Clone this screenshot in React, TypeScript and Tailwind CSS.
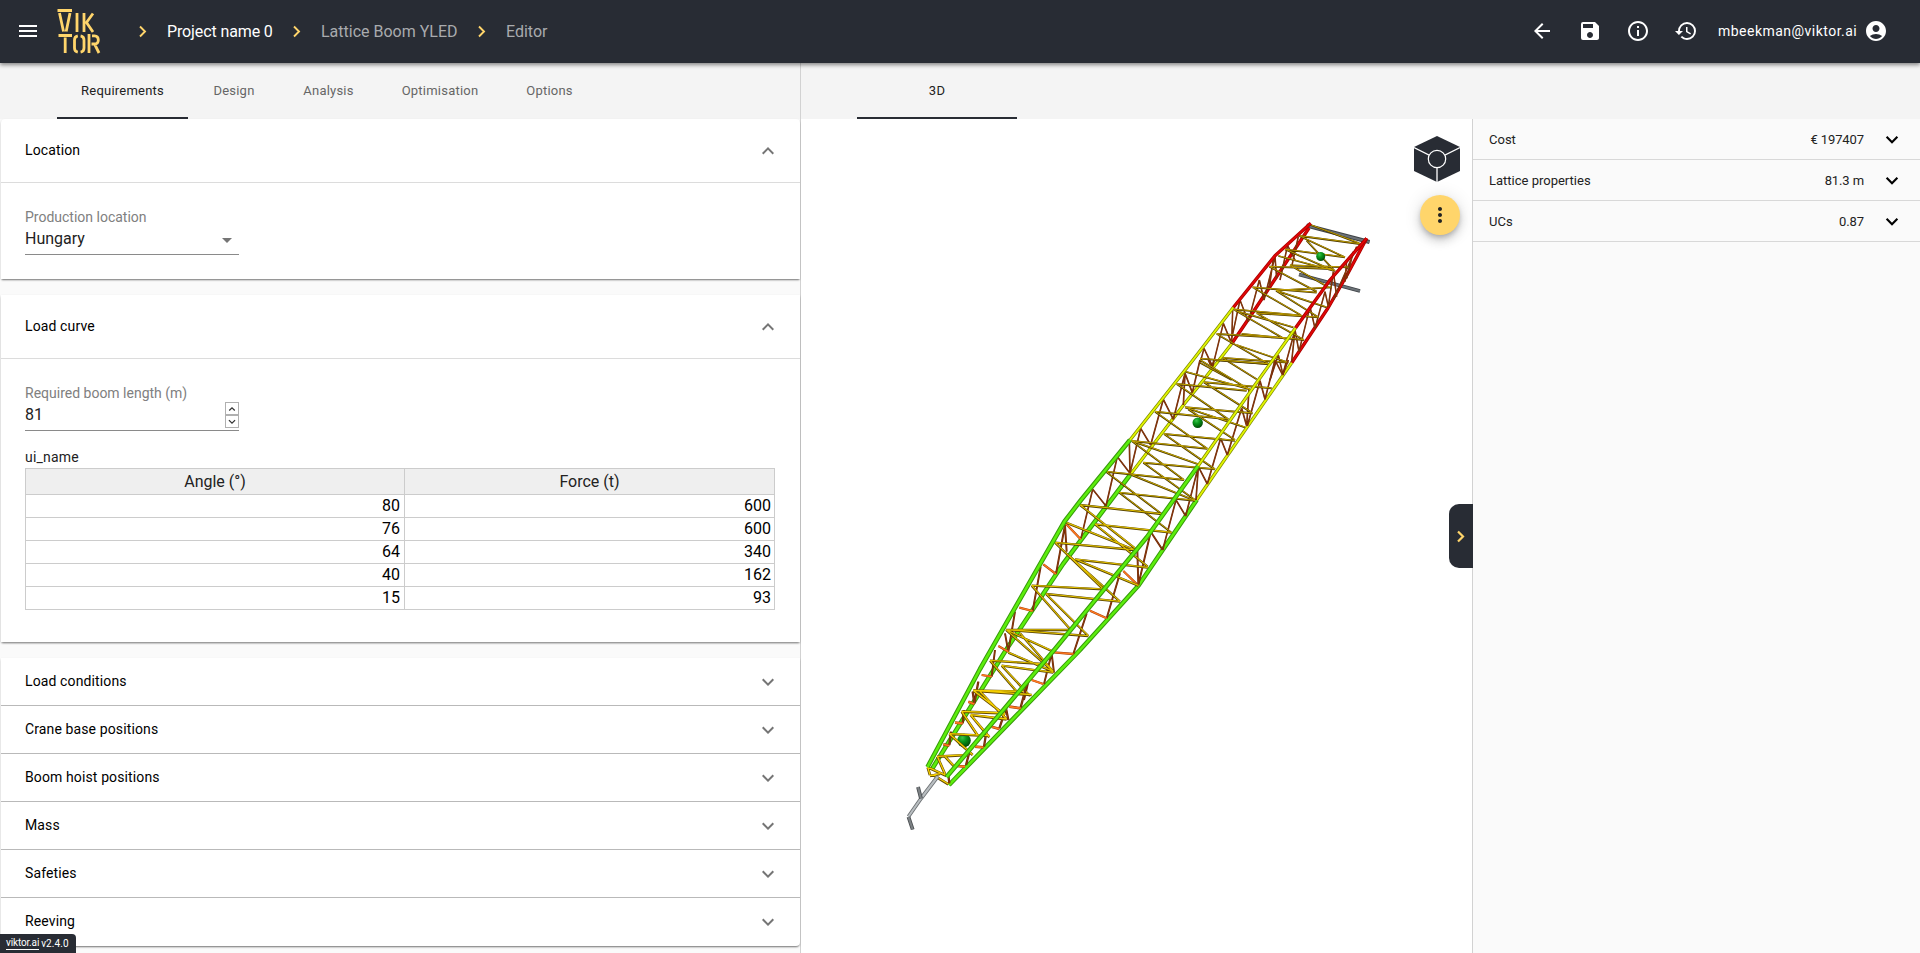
import type { ReactNode } from "react";
import {
  MdAccountCircle,
  MdArrowBack,
  MdArrowDropDown,
  MdExpandLess,
  MdExpandMore,
  MdHistory,
  MdInfoOutline,
  MdMenu,
  MdMoreVert,
  MdSave,
} from "react-icons/md";

type Segment = [number, number, number, number];

function Chevron({ className, direction = "right" }: { className: string; direction?: "right" | "down" | "up" }) {
  const d = { right: "M2 1.5 7 6.5 2 11.5", down: "M1.5 3.5 6.5 8.5 11.5 3.5", up: "M2 9 6.5 4.5 11 9" }[direction];
  return (
    <svg viewBox="0 0 13 13" className={className} fill="none" stroke="currentColor">
      <path d={d} />
    </svg>
  );
}

function Logo() {
  return (
    <svg viewBox="0 0 44 46" className="h-[46px] w-[44px]" fill="none" stroke="#ffd56b" strokeWidth="2.8">
      <path d="M.5 2.5H15M2.5 5 6.5 23.5M13 5 9.2 23.5M20 5V24M27 5V24M36 5.5 29.5 14.5 36 24" />
      <path d="M1.5 27.5H15M8.2 29.5V45M20.8 27.8Q17.5 28.5 17.5 32V40Q17.5 43.5 20.8 44.2M23.6 27.8Q27 28.5 27 32V40Q27 43.5 23.6 44.2M32 26V45M35 27.8H37.5Q41.3 28 41.3 32T37.5 36L42 45M34.5 36H38" />
    </svg>
  );
}

const crumbs = [
  { label: "Project name 0", className: "w-[105px] text-white tracking-[-0.12px]" },
  { label: "Lattice Boom YLED", className: "w-[136px] text-[#a9abae]" },
  { label: "Editor", className: "w-[42px] text-[#a9abae]" },
];

function Header() {
  return (
    <header className="relative z-10 flex h-[63px] shrink-0 items-center bg-[#282c34] pb-px pl-4 text-white shadow-[0_2px_4px_rgba(0,0,0,0.45)]">
      <MdMenu className="size-6" />
      <div className="ml-[17px]">
        <Logo />
      </div>
      <nav className="ml-[37px] flex items-center text-base">
        {crumbs.map((c) => (
          <div key={c.label} className="flex items-center whitespace-nowrap pr-[20px]">
            <Chevron className="mr-[16px] size-[13px] stroke-[1.9] text-[#ffd56b]" />
            <span className={`pt-[2px] ${c.className}`}>{c.label}</span>
          </div>
        ))}
      </nav>
      <div className="ml-auto flex items-center gap-6 pr-8">
        <MdArrowBack className="size-6" />
        <MdSave className="size-6" />
        <MdInfoOutline className="size-6" />
        <MdHistory className="size-6" />
        <div className="-ml-1 flex items-center gap-[7px]">
          <span className="w-[139px] whitespace-nowrap pb-px text-sm tracking-[0.48px]">mbeekman@viktor.ai</span>
          <MdAccountCircle className="size-6" />
        </div>
      </div>
    </header>
  );
}

function Tab({ label, className, active }: { label: string; className: string; active?: boolean }) {
  return (
    <div
      className={`flex items-center justify-center border-b-2 pt-[2px] text-[13px] tracking-[0.22px] ${
        active ? "border-[#282c34] text-[#222]" : "border-transparent text-[#666]"
      } ${className}`}
    >
      {label}
    </div>
  );
}

function PanelTitle({ title, open }: { title: string; open?: boolean }) {
  return (
    <div
      className={`flex items-center justify-between pl-6 pr-5 text-sm tracking-[0.12px] text-black ${
        open ? "h-16 border-b border-[#dcdcdc]" : "h-12"
      }`}
    >
      <span className="pb-[2px]">{title}</span>
      {open ? <MdExpandLess className="size-6 text-[#757575]" /> : <MdExpandMore className="size-6 text-[#757575]" />}
    </div>
  );
}

function Card({ className, children }: { className: string; children: ReactNode }) {
  return (
    <section className={`bg-white shadow-[0_2px_2px_-1px_rgba(0,0,0,0.4),0_1px_2px_rgba(0,0,0,0.2)] ${className}`}>
      {children}
    </section>
  );
}

const curve = [
  [80, 600],
  [76, 600],
  [64, 340],
  [40, 162],
  [15, 93],
];

const closedPanels = ["Load conditions", "Crane base positions", "Boom hoist positions", "Mass", "Safeties", "Reeving"];

function Requirements() {
  return (
    <div className="flex h-full w-[801px] shrink-0 flex-col border-r border-[#d2d2d2] bg-[#fafafa]">
      <div className="flex h-14 shrink-0 bg-[#f4f4f4] pl-[57px]">
        <Tab label="Requirements" className="w-[131px]" active />
        <Tab label="Design" className="w-[92px]" />
        <Tab label="Analysis" className="w-[97px]" />
        <Tab label="Optimisation" className="w-[126px]" />
        <Tab label="Options" className="w-[93px]" />
      </div>
      <div className="flex flex-col gap-4 pl-px">
        <Card className="h-[160px] rounded-t">
          <PanelTitle title="Location" open />
          <div className="px-6 pt-[24px]">
            <div className="flex h-5 items-center text-sm text-[#808080]">Production location</div>
            <div className="flex h-[28px] w-[214px] items-center justify-between border-b border-[#8a8a8a] pb-[2px] text-base text-[#222]">
              <span className="pb-[2px]">Hungary</span>
              <MdArrowDropDown className="size-6 text-[#757575]" />
            </div>
          </div>
        </Card>
        <Card className="h-[347px]">
          <PanelTitle title="Load curve" open />
          <div className="px-6 pt-[24px]">
            <div className="flex h-5 items-center text-sm text-[#808080]">Required boom length (m)</div>
            <div className="flex h-[28px] w-[214px] items-center justify-between border-b border-[#8a8a8a] pb-[2px] text-base text-[#222]">
              <span className="pb-[2px]">81</span>
              <div className="-mt-px flex w-[14px] flex-col text-[#333]">
                <div className="flex h-[13px] items-center justify-center border border-[#b0b0b0]">
                  <Chevron direction="up" className="size-2 stroke-[2]" />
                </div>
                <div className="flex h-[13px] items-center justify-center border border-[#b0b0b0]">
                  <Chevron direction="down" className="size-2 stroke-[2]" />
                </div>
              </div>
            </div>
            <div className="mt-[16px] flex h-[21px] items-center pb-[2px] text-sm tracking-[0.2px] text-[#222]">ui_name</div>
            <table className="w-[750px] table-fixed border-collapse text-base text-black">
              <thead>
                <tr className="h-[26px] bg-[#efefef] text-[#222]">
                  <th className="w-[379px] border border-[#ccc] p-0 font-normal leading-5">Angle (°)</th>
                  <th className="border border-[#ccc] p-0 font-normal leading-5">Force (t)</th>
                </tr>
              </thead>
              <tbody>
                {curve.map(([angle, force]) => (
                  <tr key={angle} className="h-[23px] text-right">
                    <td className="border border-[#ccc] py-0 pr-1 leading-5">{angle}</td>
                    <td className="border border-[#ccc] py-0 pr-[3px] leading-5">{force}</td>
                  </tr>
                ))}
              </tbody>
            </table>
          </div>
        </Card>
        <Card className="divide-y divide-[#b9b9b9] rounded-b">
          {closedPanels.map((title) => (
            <PanelTitle key={title} title={title} />
          ))}
        </Card>
      </div>
    </div>
  );
}

/* Each bay group carries its own local frame, three units per pixel. */
const bays: { origin: string; yellow: Segment[]; brown: Segment[]; orange: Segment[]; tone: [string, string]; width: number }[] = [
  {
    origin: "translate(1200 200) scale(0.33333)",
    tone: ["#4a3600", "#c8a600"],
    width: 5.4,
    yellow: [
      [332, 75, 478, 130], [300, 108, 480, 132], [298, 108, 435, 172], [320, 122, 405, 214], [255, 148, 435, 172],
      [255, 148, 400, 212], [235, 168, 400, 212], [208, 200, 395, 207], [270, 196, 445, 202], [208, 200, 350, 275],
      [270, 196, 385, 262], [158, 262, 350, 278], [228, 272, 395, 262], [158, 262, 302, 345], [228, 272, 380, 322],
      [100, 328, 305, 347], [115, 335, 280, 382], [170, 340, 355, 352], [100, 328, 255, 418], [228, 272, 355, 352],
      [50, 402, 260, 415], [125, 402, 312, 420], [170, 340, 312, 420], [50, 402, 205, 492], [110, 435, 265, 488],
      [0, 476, 205, 492], [68, 474, 265, 488], [68, 474, 170, 538], [0, 488, 95, 540],
    ],
    brown: [
      [225, 170, 192, 300], [178, 240, 192, 300], [178, 240, 145, 365], [225, 170, 230, 235], [220, 175, 208, 262],
      [262, 140, 240, 240], [262, 135, 285, 180], [295, 110, 275, 200], [120, 300, 145, 365], [120, 300, 92, 430], [98, 330, 95, 430],
      [70, 370, 95, 430], [70, 370, 38, 500], [12, 445, 38, 500], [12, 445, 0, 490], [400, 215, 385, 320],
      [400, 215, 410, 290], [440, 180, 435, 245], [460, 155, 440, 235], [470, 140, 400, 300], [375, 275, 385, 320],
      [375, 275, 345, 385], [330, 320, 345, 385], [330, 320, 297, 455], [285, 390, 297, 455], [285, 390, 275, 485],
      [285, 390, 248, 525], [235, 465, 248, 520], [235, 465, 210, 540],
    ],
    orange: [],
  },
  {
    origin: "translate(1080 360) scale(0.33333)",
    tone: ["#4a3800", "#ccac00"],
    width: 5.8,
    yellow: [
      [360, 0, 510, 90], [315, 35, 510, 88], [290, 72, 500, 92], [290, 72, 445, 178], [372, 67, 575, 85],
      [372, 67, 515, 158], [315, 142, 518, 160], [315, 142, 495, 202], [225, 155, 445, 178], [225, 155, 382, 266],
      [325, 148, 465, 240], [252, 222, 465, 242], [252, 222, 405, 328], [155, 243, 382, 266], [155, 243, 358, 314],
      [155, 243, 312, 360], [190, 308, 405, 328], [190, 308, 345, 420], [78, 335, 312, 360], [78, 335, 245, 462],
      [155, 345, 345, 422], [118, 398, 345, 422], [118, 398, 272, 516], [400, 0, 565, 12],
    ],
    brown: [
      [315, 40, 310, 135], [315, 40, 337, 98], [360, 0, 337, 98], [385, 0, 395, 22], [402, 0, 395, 22],
      [315, 40, 280, 178], [250, 118, 280, 178], [250, 118, 212, 255], [182, 205, 212, 255], [182, 205, 150, 340],
      [148, 245, 150, 340], [112, 290, 150, 340], [112, 290, 78, 438], [38, 388, 78, 438], [38, 388, 3, 535],
      [585, 0, 555, 118], [585, 0, 608, 45], [625, 0, 608, 45], [540, 62, 555, 118], [540, 62, 502, 198],
      [507, 90, 500, 198], [485, 145, 500, 198], [485, 145, 442, 285], [422, 235, 442, 285], [422, 235, 382, 372],
      [355, 320, 382, 372], [355, 320, 348, 420], [355, 320, 317, 468], [288, 420, 317, 468], [288, 420, 248, 570],
    ],
    orange: [],
  },
  {
    origin: "translate(980 500) scale(0.33333)",
    tone: ["#544000", "#e2c000"],
    width: 6.8,
    yellow: [
      [300, 15, 545, 42], [300, 15, 465, 145], [258, 68, 465, 150], [345, 73, 575, 98], [345, 73, 503, 200],
      [225, 128, 465, 150], [225, 128, 370, 268], [285, 178, 503, 203], [285, 178, 475, 257], [270, 170, 420, 305],
      [155, 257, 370, 268], [155, 257, 268, 385], [198, 282, 420, 305], [198, 282, 325, 408], [78, 390, 268, 390],
      [78, 390, 325, 408], [78, 390, 220, 455], [78, 390, 220, 515], [120, 400, 220, 515], [30, 482, 190, 492],
      [85, 458, 220, 515], [30, 482, 108, 572], [65, 497, 220, 518], [65, 497, 150, 588],
    ],
    brown: [
      [255, 75, 260, 155], [255, 75, 228, 222], [182, 200, 158, 333], [105, 335, 85, 455], [75, 400, 85, 455],
      [45, 450, 35, 530], [515, 100, 548, 150], [510, 105, 475, 255], [472, 150, 475, 255], [420, 220, 380, 355],
      [320, 340, 280, 462], [215, 460, 222, 518], [215, 460, 192, 552], [145, 545, 132, 600],
    ],
    orange: [
      [255, 68, 302, 118], [190, 193, 228, 222], [118, 323, 158, 333], [55, 438, 85, 455], [5, 525, 35, 530],
      [430, 213, 475, 257], [330, 332, 380, 355], [222, 457, 280, 462], [155, 540, 190, 552],
    ],
  },
  {
    origin: "translate(890 650) scale(0.33333)",
    tone: ["#644a00", "#f4ce00"],
    width: 8,
    yellow: [
      [250, 122, 400, 125], [250, 122, 425, 135], [250, 122, 345, 195], [270, 125, 350, 208], [215, 185, 345, 190],
      [242, 195, 350, 208], [215, 185, 262, 255], [242, 195, 298, 262], [178, 252, 298, 258], [178, 252, 248, 315],
      [142, 320, 235, 315], [142, 320, 165, 372], [165, 320, 195, 352], [113, 352, 170, 378], [130, 375, 175, 403],
      [113, 352, 120, 375], [120, 378, 150, 372],
    ],
    brown: [
      [265, 95, 253, 160], [248, 125, 253, 160], [222, 180, 218, 220], [183, 245, 178, 285], [412, 98, 392, 172],
      [348, 175, 355, 210], [348, 175, 328, 235], [290, 240, 282, 290], [240, 300, 228, 345], [175, 375, 178, 400],
    ],
    orange: [
      [235, 155, 253, 162], [195, 218, 218, 220], [160, 283, 178, 287], [358, 170, 392, 175], [305, 230, 328, 237],
      [255, 290, 280, 292], [200, 348, 225, 350],
    ],
  },
];

function Rod({ points, edge, fill, width }: { points: string; edge: string; fill: string; width: number }) {
  return (
    <g fill="none" strokeLinejoin="round">
      <polyline points={points} stroke={edge} strokeWidth={width} />
      <polyline points={points} stroke={fill} strokeWidth={width * 0.55} />
    </g>
  );
}

const red = { edge: "#a80000", fill: "#e00606", width: 3.4 };
const lime = { edge: "#7f8e00", fill: "#e2f400", width: 3.3 };
const green = { edge: "#379a0c", fill: "#5cee0c", width: 4.6 };

function toPath(segments: Segment[]) {
  return segments.map(([x1, y1, x2, y2]) => `M${x1} ${y1}L${x2} ${y2}`).join("");
}

function BoomModel() {
  return (
    <svg viewBox="801 119 671 834" className="h-[834px] w-[671px]">
      <defs>
        <radialGradient id="ball" cx="0.38" cy="0.3" r="0.7">
          <stop offset="0" stopColor="#3fc24f" />
          <stop offset="0.4" stopColor="#0a9a1c" />
          <stop offset="1" stopColor="#004d06" />
        </radialGradient>
      </defs>
      <Rod points="1306.500,225.500 1369.500,242" edge="#3e4246" fill="#6c7277" width={3.9} />
      <Rod points="1299,274.500 1360,291" edge="#3e4246" fill="#6c7277" width={3.4} />
      <Rod points="1309,228 1250,316.700 1231.500,344" {...red} />
      <Rod points="1231.500,344 1203.500,380 1185,403 1130,475" {...lime} />
      <Rod points="1130,475 1081,540 1063,564 1006,650 932,769" {...green} />
      <Rod points="1366.700,238.300 1347,275 1328,308 1291.700,362.700" {...red} />
      <Rod points="1291.700,362.700 1196.700,500" {...lime} />
      <Rod points="1196.700,500 1138.500,585.500 1080,650 949,785" {...green} />
      <circle cx="964" cy="740.500" r="6.800" fill="url(#ball)" />
      {bays.map((bay) => (
        <g key={bay.origin} transform={bay.origin} fill="none">
          <path d={toPath(bay.brown)} stroke="#6e2606" strokeWidth={bay.width * 0.85} />
          <path d={toPath(bay.brown)} stroke="#96440f" strokeWidth={bay.width * 0.3} />
          <path d={toPath(bay.orange)} stroke="#a03c08" strokeWidth={bay.width} />
          <path d={toPath(bay.orange)} stroke="#ff7a20" strokeWidth={bay.width * 0.6} />
          <path d={toPath(bay.yellow)} stroke={bay.tone[0]} strokeWidth={bay.width} />
          <path d={toPath(bay.yellow)} stroke={bay.tone[1]} strokeWidth={bay.width * 0.5} transform="translate(0 -0.9)" />
        </g>
      ))}
      <circle cx="1320.700" cy="256.500" r="4.500" fill="url(#ball)" />
      <circle cx="1197.700" cy="422.700" r="5.200" fill="url(#ball)" />
      <Rod points="1310.700,223.300 1275,255.700 1233.300,307.500" {...red} />
      <Rod points="1233.300,307.500 1193,360 1130,440" {...lime} />
      <Rod points="1130,440 1081,500 1064.500,521.500 980,669 927.500,767" {...green} />
      <Rod points="1366.700,238.300 1330,280 1295.500,328" {...red} />
      <Rod points="1295.500,328 1258.500,380 1198,466" {...lime} />
      <Rod points="1198,466 1147,537 1055,649 946.500,777" {...green} />
      <Rod points="937.700,776.500 921,798.500 908.500,816.500" edge="#6d7174" fill="#b9bec1" width={3.8} />
      <Rod points="918,787 921,798.500" edge="#4b4f52" fill="#7d8285" width={3.8} />
      <Rod points="908.500,817 912.700,829.500" edge="#4b4f52" fill="#7d8285" width={3.8} />
    </svg>
  );
}

const results = [
  { label: "Cost", value: "€ 197407" },
  { label: "Lattice properties", value: "81.3 m" },
  { label: "UCs", value: "0.87" },
];

function Viewer() {
  return (
    <div className="flex min-w-0 flex-1 flex-col">
      <div className="flex h-14 shrink-0 bg-[#f4f4f4] pl-14">
        <Tab label="3D" className="w-[160px]" active />
      </div>
      <div className="flex min-h-0 flex-1">
        <div className="relative w-[671px] shrink-0 bg-white">
          <BoomModel />
          <svg viewBox="0 0 46 46" className="absolute right-[12px] top-[17px] size-[46px]">
            <path d="M23 0 46 11V35L23 46 0 35V11Z" fill="#282c34" />
            <path d="M0 11.500 23 23 46 11.500M23 23V46" fill="none" stroke="#fff" strokeWidth="1.300" />
            <circle cx="23" cy="23" r="8.700" fill="#282c34" stroke="#fff" strokeWidth="1.200" />
          </svg>
          <button className="absolute right-3 top-[76px] flex size-10 items-center justify-center rounded-full bg-[#ffd56b] shadow-[0_3px_5px_-1px_rgba(0,0,0,0.2),0_6px_10px_rgba(0,0,0,0.14),0_1px_18px_rgba(0,0,0,0.12)]">
            <MdMoreVert className="size-6 text-[#222]" />
          </button>
          <div className="absolute -right-px top-[385px] z-10 flex h-16 w-6 items-center justify-center rounded-l-[10px] bg-[#282c34]">
            <Chevron className="ml-[3px] size-[13px] stroke-[2.2] text-[#ffd56b]" />
          </div>
        </div>
        <aside className="flex-1 border-l border-[#d2d2d2] bg-[#fafafa]">
          {results.map((r) => (
            <div key={r.label} className="flex h-[41px] items-center border-b border-[#d8d8d8] pl-4 pr-[21px] pt-px text-[13px] text-[#222]">
              <span>{r.label}</span>
              <span className="ml-auto mr-[21px] tracking-[-0.1px]">{r.value}</span>
              <Chevron direction="down" className="size-[14px] stroke-[2] text-black" />
            </div>
          ))}
        </aside>
      </div>
    </div>
  );
}

export default function App() {
  return (
    <div className="relative flex h-[953px] w-full flex-col overflow-hidden bg-white font-[Roboto,sans-serif]">
      <Header />
      <main className="flex min-h-0 flex-1">
        <Requirements />
        <Viewer />
      </main>
      <div className="absolute bottom-0 left-0 flex h-[19px] w-[76px] items-center whitespace-nowrap rounded-tr bg-[#282c34] pl-[6px] text-[10px] text-white">
        <span className="border-b border-white leading-[12px] tracking-[-0.15px]">viktor.ai</span>
        <span className="ml-[2px] tracking-[0.1px]">v2.4.0</span>
      </div>
    </div>
  );
}
